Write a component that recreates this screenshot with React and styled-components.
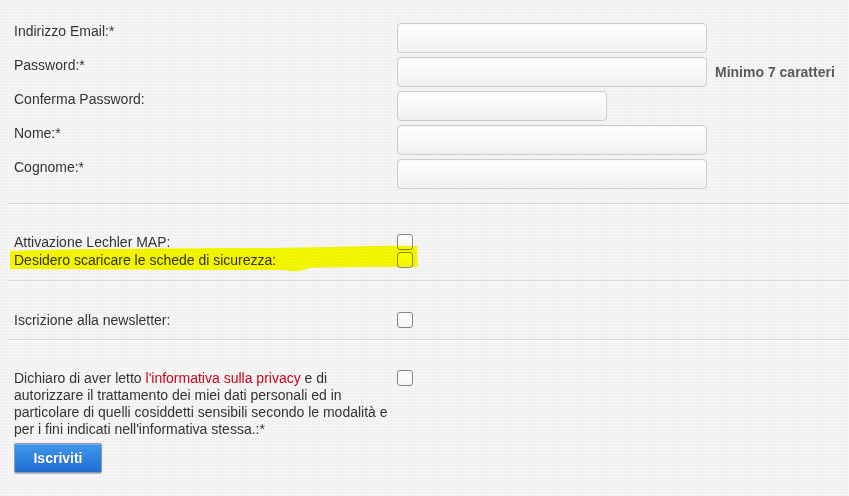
import React from "react";
import styled, { createGlobalStyle } from "styled-components";

const GlobalStyle = createGlobalStyle`
  html, body {
    margin: 0;
    padding: 0;
  }
  body {
    background-color: #f6f6f6;
    background-image:
      radial-gradient(circle at 1px 1px, #efefef 0.8px, transparent 1px);
    background-size: 3px 3px;
    font-family: "Liberation Sans", Arial, sans-serif;
    font-size: 14px;
    color: #333333;
    overflow: hidden;
  }
`;

const Page = styled.form`
  padding-left: 8px;
  width: 841px;
`;

const Section = styled.div`
  padding: ${(p) => p.$top}px 0 ${(p) => p.$bottom}px 6px;
  display: flex;
  flex-direction: column;
  gap: ${(p) => p.$gap || 0}px;
`;

const Divider = styled.div`
  height: 0;
  border-top: 1px solid #d9d9d9;
  border-bottom: 1px solid #fbfbfb;
`;

const Row = styled.div`
  display: flex;
  align-items: flex-start;
  position: relative;
`;

const Label = styled.label`
  width: 383px;
  flex: none;
  line-height: ${(p) => p.$lh || 16}px;
  color: #333333;
`;

const TextInput = styled.input`
  box-sizing: border-box;
  width: ${(p) => p.$w}px;
  height: 30px;
  margin: 0;
  border: 1px solid #cccccc;
  border-radius: 4px;
  background: linear-gradient(#ffffff, #f1f1f1);
  box-shadow: inset 0 1px 1px rgba(0, 0, 0, 0.03);
  font: inherit;
  padding: 0 6px;
  outline: none;
`;

const Hint = styled.span`
  align-self: center;
  margin-left: 8px;
  font-weight: bold;
  color: #5a5a5a;
  white-space: nowrap;
`;

const Check = styled.input.attrs({ type: "checkbox" })`
  appearance: none;
  -webkit-appearance: none;
  box-sizing: border-box;
  width: 16px;
  height: 16px;
  margin: 0;
  flex: none;
  border: 1px solid #858585;
  border-radius: 3px;
  background: linear-gradient(#ffffff, #f4f4f4);
`;

const Link = styled.a`
  color: #d0021b;
  text-decoration: none;
`;

const Highlight = styled.svg`
  position: absolute;
  left: -5px;
  top: -7px;
  width: 410px;
  height: 28px;
  mix-blend-mode: multiply;
  pointer-events: none;
`;

const Button = styled.button`
  box-sizing: border-box;
  margin-top: 5px;
  width: 88px;
  height: 30px;
  padding: 0;
  border: 1px solid #8d9aab;
  border-radius: 2px;
  background: linear-gradient(#4197ec, #1f6dd2);
  box-shadow: inset 0 1px 0 rgba(255, 255, 255, 0.25), 0 1px 0 #b9b9b9;
  color: #ffffff;
  font-family: "Liberation Sans", Arial, sans-serif;
  font-size: 14px;
  font-weight: bold;
  text-shadow: 0 0 1px rgba(0, 0, 0, 0.25);
  cursor: pointer;
`;

const fields = [
  { label: "Indirizzo Email:*", w: 310 },
  { label: "Password:*", w: 310, hint: "Minimo 7 caratteri" },
  { label: "Conferma Password:", w: 210 },
  { label: "Nome:*", w: 310 },
  { label: "Cognome:*", w: 310 },
];

export default function App() {
  return (
    <>
      <GlobalStyle />
      <Page onSubmit={(e) => e.preventDefault()}>
        <Section $top={23} $bottom={14} $gap={4}>
          {fields.map((f) => (
            <Row key={f.label}>
              <Label>{f.label}</Label>
              <TextInput $w={f.w} type={f.label.startsWith("Pass") || f.label.startsWith("Conf") ? "password" : "text"} />
              {f.hint && <Hint>{f.hint}</Hint>}
            </Row>
          ))}
        </Section>
        <Divider />
        <Section $top={29} $bottom={12} $gap={2}>
          <Row>
            <Label>Attivazione Lechler MAP:</Label>
            <Check />
          </Row>
          <Row>
            <Label>Desidero scaricare le schede di sicurezza:</Label>
            <Check />
            <Highlight viewBox="0 0 410 28" aria-hidden="true">
              <path
                d="M1 6 C60 4 140 3 270 3 C330 2 380 0 408 1 L409 22 C380 22 320 22 300 23 C292 27 282 27 276 25 C200 25 100 25 1 24 Z"
                fill="#ffff00"
              />
            </Highlight>
          </Row>
        </Section>
        <Divider />
        <Section $top={30} $bottom={11}>
          <Row>
            <Label>Iscrizione alla newsletter:</Label>
            <Check />
          </Row>
        </Section>
        <Divider />
        <Section $top={29} $bottom={20}>
          <Row>
            <Label $lh={17}>
              Dichiaro di aver letto <Link href="#">l'informativa sulla privacy</Link> e di
              autorizzare il trattamento dei miei dati personali ed in particolare di quelli
              cosiddetti sensibili secondo le modalità e per i fini indicati nell'informativa
              stessa.:*
            </Label>
            <Check />
          </Row>
          <div>
            <Button type="submit">Iscriviti</Button>
          </div>
        </Section>
      </Page>
    </>
  );
}
